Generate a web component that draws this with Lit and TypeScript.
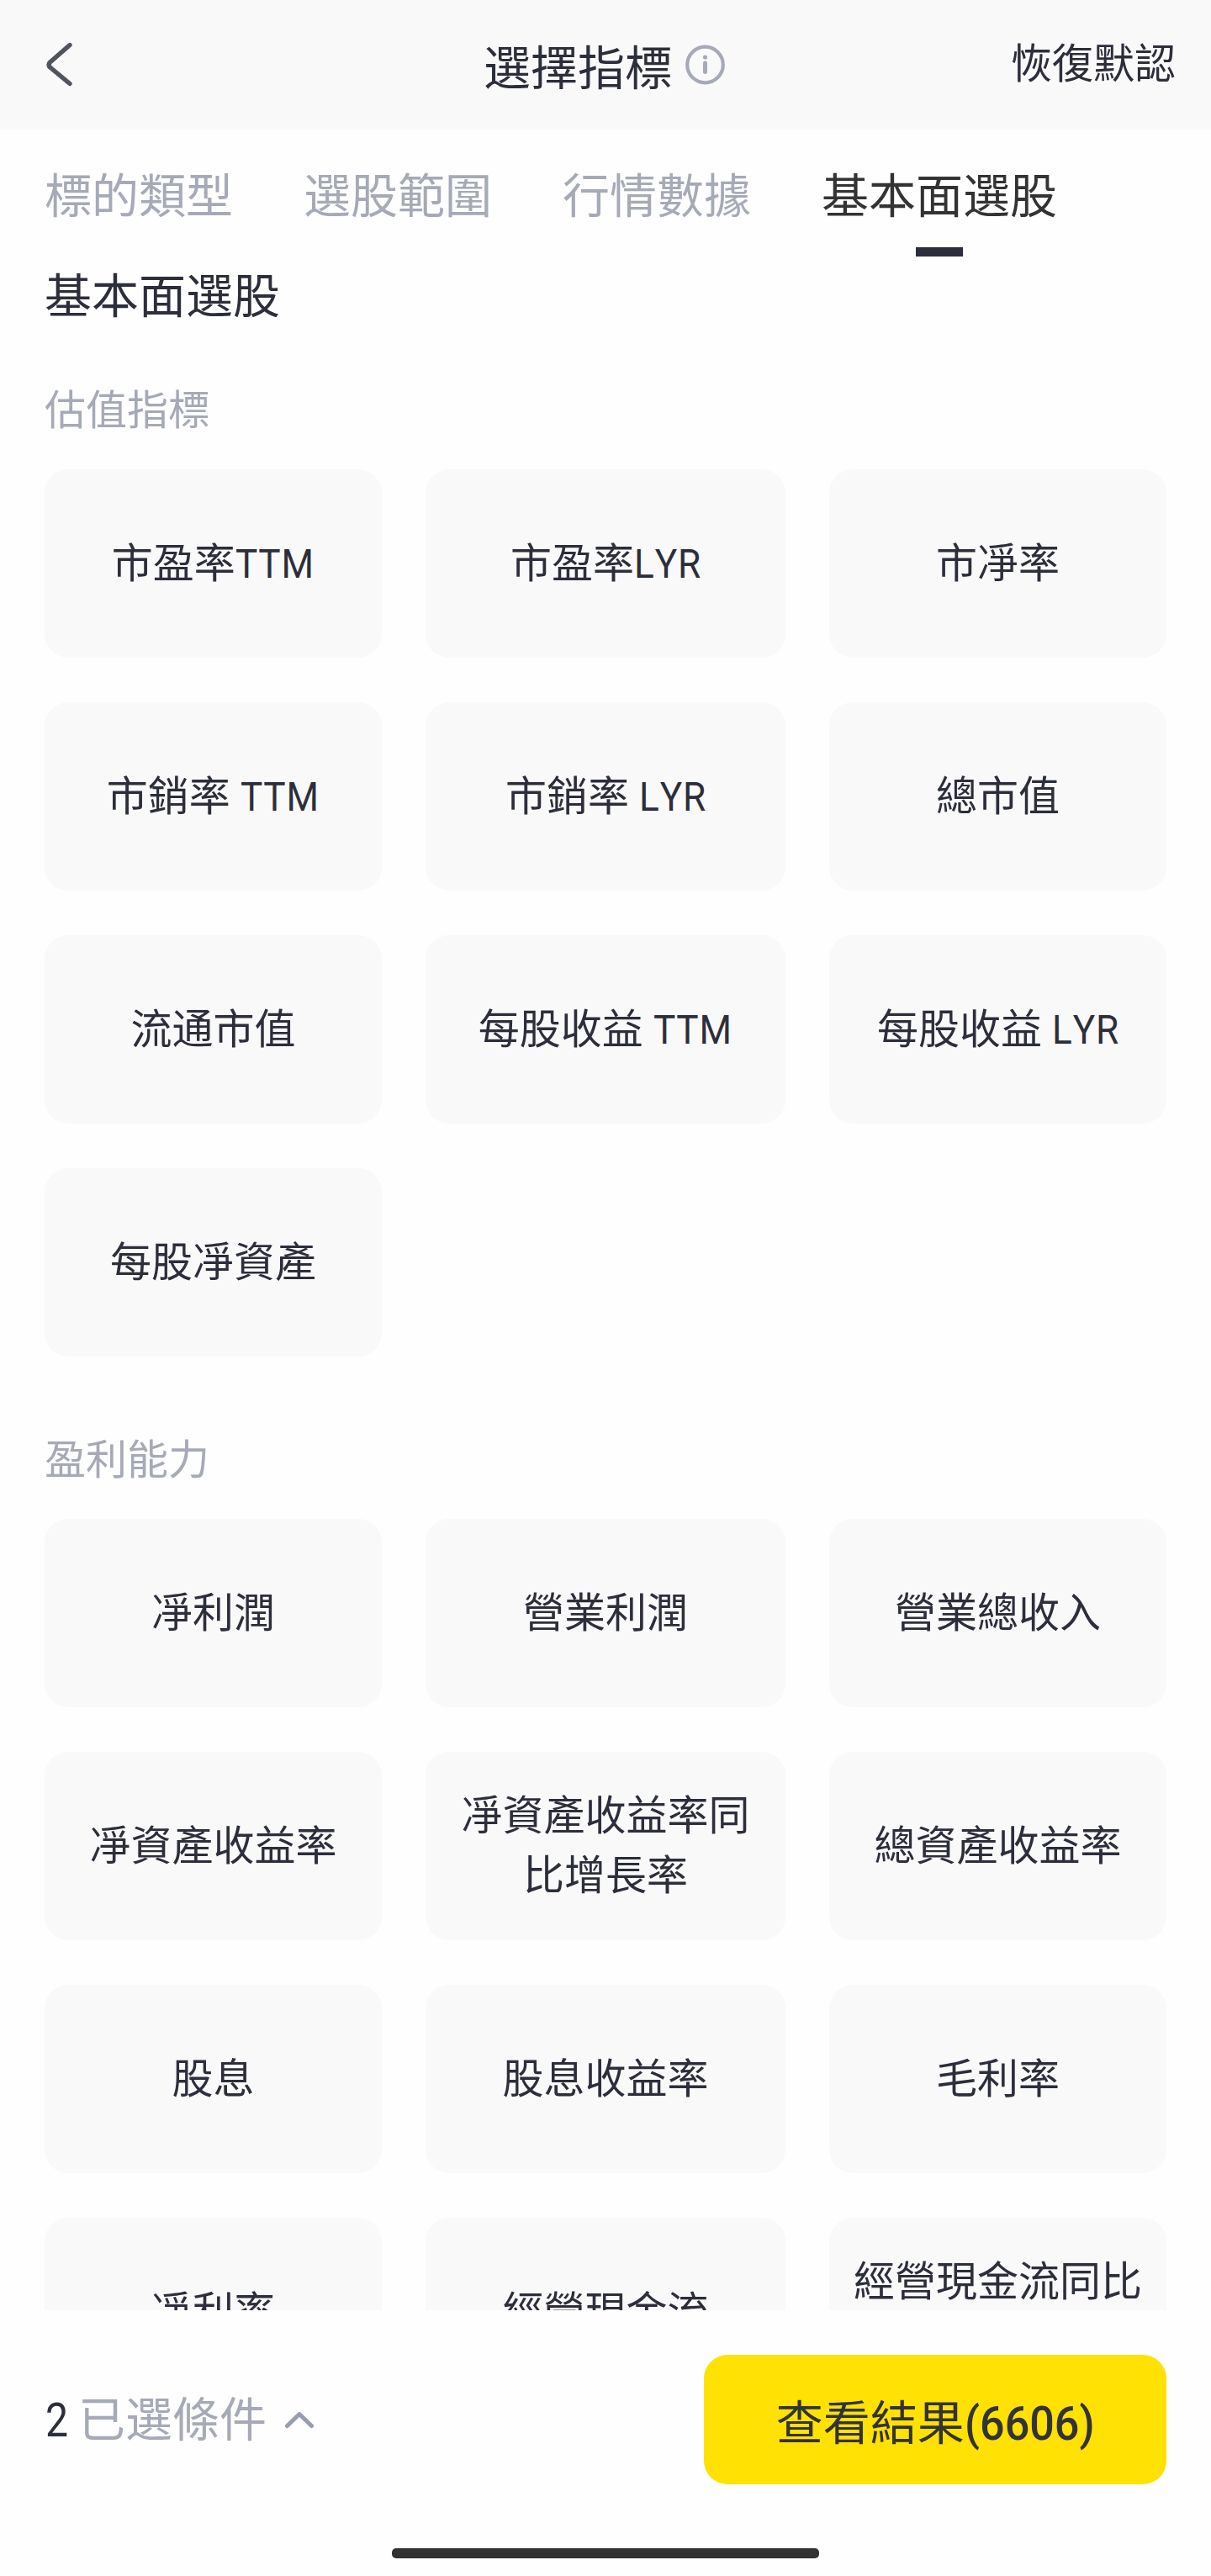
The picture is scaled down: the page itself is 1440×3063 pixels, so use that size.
import { LitElement, html, css } from "lit";
import { customElement, property, state } from "lit/decorators.js";
import { classMap } from "lit/directives/class-map.js";

interface Group {
  name: string;
  items: string[];
}

const TABS = ["標的類型", "選股範圍", "行情數據", "基本面選股"];

const GROUPS: Group[] = [
  {
    name: "估值指標",
    items: [
      "市盈率TTM", "市盈率LYR", "市凈率",
      "市銷率 TTM", "市銷率 LYR", "總市值",
      "流通市值", "每股收益 TTM", "每股收益 LYR",
      "每股凈資產",
    ],
  },
  {
    name: "盈利能力",
    items: [
      "凈利潤", "營業利潤", "營業總收入",
      "凈資產收益率", "凈資產收益率同比增長率", "總資產收益率",
      "股息", "股息收益率", "毛利率",
      "凈利率", "經營現金流", "經營現金流同比增長率",
    ],
  },
];

@customElement("indicator-group")
class IndicatorGroup extends LitElement {
  static styles = css`
    :host { display: block; }
    .name { color: #a6aab6; font-size: 49px; line-height: 70px; margin-bottom: 34px; }
    .grid {
      display: grid;
      grid-template-columns: 401px 428px 401px;
      grid-auto-rows: 224px;
      gap: 53px 52px;
    }
    .card {
      display: flex;
      align-items: center;
      justify-content: center;
      box-sizing: border-box;
      padding: 0 24px;
      border-radius: 28px;
      background: #f9f9f9;
      color: #2d2e3b;
      font-size: 49px;
      line-height: 71px;
      text-align: center;
    }
    /* Latin suffixes are set slightly condensed beside the ideographs. */
    .latin {
      display: inline-block;
      font-kerning: none;
      letter-spacing: 1px;
      transform: scaleX(0.9);
      transform-origin: left;
      margin-right: -10px;
    }
  `;

  @property({ attribute: false }) group!: Group;

  private label(text: string) {
    const m = text.match(/^([^A-Z]+)([A-Z]+)$/);
    return m ? html`${m[1]}<span class="latin">${m[2]}</span>` : text;
  }

  render() {
    return html`
      <div class="name">${this.group.name}</div>
      <div class="grid">
        ${this.group.items.map((t) => html`<div class="card"><span>${this.label(t)}</span></div>`)}
      </div>
    `;
  }
}

@customElement("app-root")
class AppRoot extends LitElement {
  static styles = css`
    :host {
      display: flex;
      flex-direction: column;
      width: 1440px;
      height: 3063px;
      overflow: hidden;
      background: #fefefe;
      color: #2d2e3b;
      font-family: Roboto, "Noto Sans CJK SC", sans-serif;
      font-size: 56px;
      line-height: 80px;
    }
    svg { display: block; flex: none; }
    .header {
      display: grid;
      grid-template-columns: 1fr auto 1fr;
      align-items: center;
      flex: none;
      height: 154px;
      box-sizing: border-box;
      padding: 0 42px 0 39px;
      background: #f9f9f9;
    }
    .back { padding-left: 13px; }
    .title { display: flex; align-items: center; gap: 16px; }
    .title .text { padding-top: 10px; }
    .reset { justify-self: end; font-size: 49px; }
    .tabs { display: flex; flex: none; gap: 84px; padding: 40px 53px 0; }
    .tab { display: flex; flex-direction: column; align-items: center; gap: 20px; color: #a6aab6; }
    .tab.active { color: #333; }
    .tab.active::after { content: ""; width: 56px; height: 11px; background: #2d2e3b; }
    .body { flex: 1; min-height: 0; overflow: hidden; padding: 8px 53px 0; }
    .heading { margin-bottom: 61px; }
    .groups { display: flex; flex-direction: column; gap: 89px; }
    .footer {
      display: flex;
      flex-direction: column;
      justify-content: space-between;
      flex: none;
      height: 316px;
      box-sizing: border-box;
      padding: 53px 53px 21px;
    }
    .bar { display: flex; align-items: center; justify-content: space-between; }
    .selected { display: flex; align-items: center; padding-top: 2px; }
    .count { width: 39px; margin-left: 1px; transform: scaleX(0.86); transform-origin: left; }
    .caption { color: #a6aab6; margin-right: 22px; }
    .result {
      display: flex;
      align-items: center;
      justify-content: center;
      width: 550px;
      height: 154px;
      box-sizing: border-box;
      padding-top: 10px;
      border-radius: 28px;
      background: #ffe103;
      color: #333;
    }
    .total {
      font-weight: 500;
      transform: scaleX(0.93);
      transform-origin: left;
      margin-right: -12px;
    }
    .home { align-self: center; width: 508px; height: 12px; border-radius: 5px; background: #333; }
  `;

  @state() private active = 3;

  render() {
    return html`
      <div class="header">
        <div class="back">
          <svg width="38" height="56" viewBox="0 0 38 56" fill="none" stroke="#51535f" stroke-width="5.4"
            stroke-linecap="round" stroke-linejoin="round">
            <path d="M31 4.500 L7.500 25 Q4.500 28 7.500 31 L31 50.500" />
          </svg>
        </div>
        <div class="title">
          <span class="text">選擇指標</span>
          <svg width="47" height="48" viewBox="0 0 47 48" fill="none" stroke="#a6aab6">
            <circle cx="23.500" cy="24" r="21.300" stroke-width="4.200" />
            <circle cx="23.500" cy="15" r="2.600" fill="#a6aab6" stroke="none" />
            <path d="M23.500 22 V32.500" stroke-width="5" stroke-linecap="round" />
          </svg>
        </div>
        <div class="reset">恢復默認</div>
      </div>
      <div class="tabs">
        ${TABS.map((t, i) => html`
          <div class=${classMap({ tab: true, active: i === this.active })}
            @click=${() => (this.active = i)}>${t}</div>`)}
      </div>
      <div class="body">
        <div class="heading">基本面選股</div>
        <div class="groups">
          ${GROUPS.map((g) => html`<indicator-group .group=${g}></indicator-group>`)}
        </div>
      </div>
      <div class="footer">
        <div class="bar">
          <div class="selected">
            <span class="count">2</span>
            <span class="caption">已選條件</span>
            <svg width="34" height="20" viewBox="0 0 34 20" fill="none" stroke="#989db2" stroke-width="5"
              stroke-linecap="round" stroke-linejoin="round">
              <path d="M2.500 16.500 L17 2.500 L31.500 16.500" />
            </svg>
          </div>
          <div class="result">查看結果<span class="total">(6606)</span></div>
        </div>
        <div class="home"></div>
      </div>
    `;
  }
}
